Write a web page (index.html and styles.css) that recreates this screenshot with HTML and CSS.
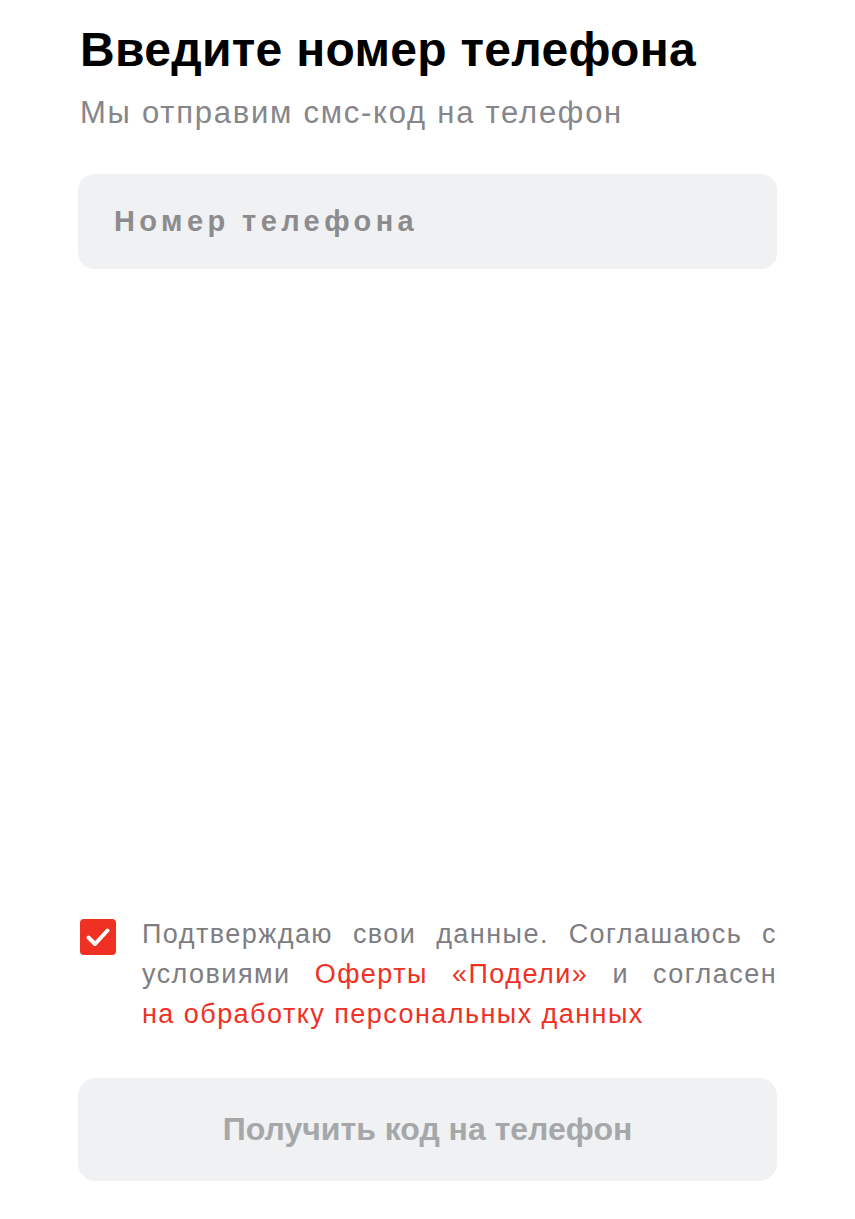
FILE: index.html
```html
<!DOCTYPE html>
<html lang="ru">
<head>
<meta charset="utf-8">
<link rel="stylesheet" href="styles.css">
</head>
<body>
<main class="page">
  <h1 class="title">Введите номер телефона</h1>
  <p class="subtitle">Мы отправим смс-код на телефон</p>
  <div class="field">Номер телефона</div>
  <div class="spacer"></div>
  <div class="consent">
    <span class="check">
      <svg viewBox="0 0 36 36" width="36" height="36"><rect width="36" height="36" rx="4" fill="#ef3124"/><path d="M8.5 18.5l6.5 6.5L27.5 11.5" fill="none" stroke="#fff" stroke-width="4" stroke-linecap="round" stroke-linejoin="round"/></svg>
    </span>
    <p class="consent-text">Подтверждаю свои данные. Соглашаюсь с условиями <span class="link">Оферты «Подели»</span> и согласен <span class="link nowrap">на обработку персональных данных</span></p>
  </div>
  <button class="submit" type="button">Получить код на телефон</button>
</main>
</body>
</html>
```
FILE: styles.css
```css
html, body {
  margin: 0;
  padding: 0;
  background: #fff;
}
body {
  font-family: "Liberation Sans", Arial, sans-serif;
}
.page {
  width: 855px;
  height: 1219px;
  box-sizing: border-box;
  padding: 22px 78px 38px 78px;
  display: flex;
  flex-direction: column;
}
.title {
  margin: 0 0 0 2px;
  font-size: 48px;
  line-height: 56px;
  font-weight: 700;
  color: #000;
  letter-spacing: 0.3px;
}
.subtitle {
  margin: 16px 0 0 2px;
  font-size: 31px;
  line-height: 38px;
  color: #86868b;
  letter-spacing: 1.75px;
}
.field {
  margin-top: 42px;
  height: 95px;
  background: #f0f1f3;
  border-radius: 16px;
  display: flex;
  align-items: center;
  padding-left: 36px;
  font-size: 29px;
  font-weight: 700;
  color: #8c8c8e;
  letter-spacing: 4.4px;
}
.spacer {
  flex: 1;
}
.consent {
  display: flex;
  align-items: flex-start;
  gap: 26px;
  padding-left: 2px;
}
.check {
  flex: none;
  width: 36px;
  height: 36px;
  margin-top: 5px;
  display: block;
}
.check svg { display: block; }
.consent-text {
  margin: 0;
  flex: 1;
  font-size: 27px;
  line-height: 40px;
  color: #7d7d82;
  text-align: justify;
  letter-spacing: 1.45px;
}
.link {
  color: #ef3124;
}
.nowrap {
  white-space: nowrap;
}
.submit {
  margin-top: 44px;
  height: 103px;
  border: none;
  background: #f0f1f3;
  border-radius: 18px;
  font-family: "Liberation Sans", Arial, sans-serif;
  font-size: 32px;
  font-weight: 700;
  color: #a5a7a9;
  padding: 0;
}
```
